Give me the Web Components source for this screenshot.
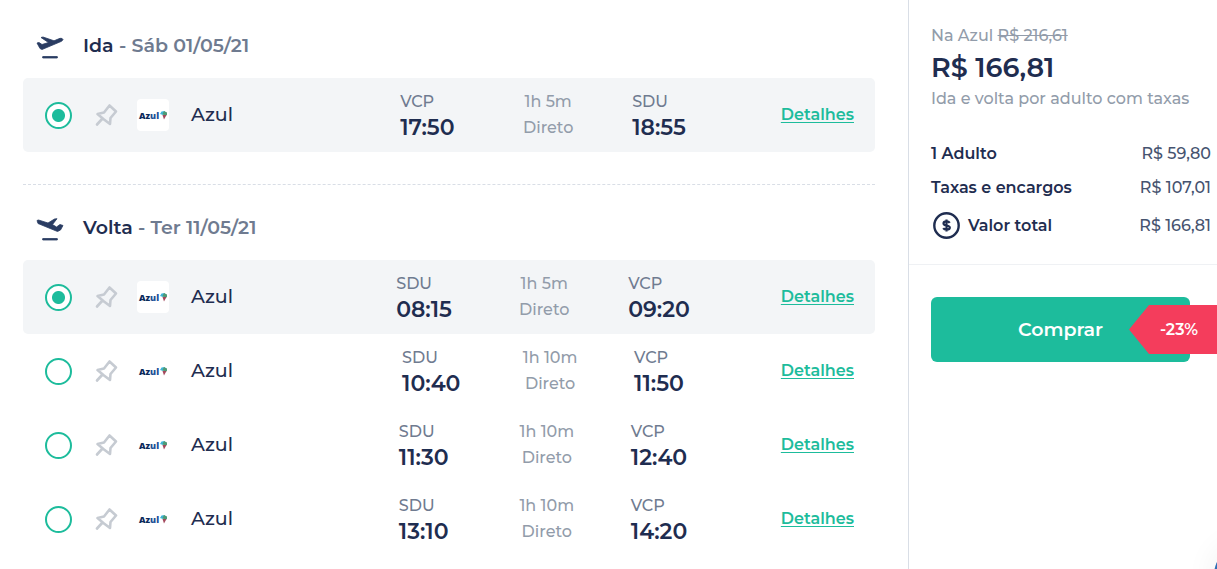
<!DOCTYPE html>
<html lang="pt-BR">
<head>
<meta charset="utf-8">
<title>Azul - Ida e volta</title>
<style>
  body { margin: 0; background: #fff; font-family: Montserrat, Inter, "Liberation Sans", sans-serif; color: #1f2d50; }
</style>
</head>
<body>
<trip-page></trip-page>

<template id="t-page">
  <style>
    :host { display: flex; min-height: 100vh; overflow: hidden; position: relative; }
    main { flex: 1; min-width: 0; padding: 24px 33px 12px 23px; }
    hr { border: 0; border-top: 1px dashed #d9dee6; margin: 32px 0 21px; }
    price-panel { flex: 0 0 308px; }
    .chat { position: absolute; right: -57px; bottom: -36px; width: 60px; height: 60px; border-radius: 50%; background: #2f6fb5; box-shadow: 0 0 32px rgba(0, 0, 0, .07); }
  </style>
  <main>
    <trip-leg kind="ida" label="Ida" date="Sáb 01/05/21">
      <flight-row group="ida" from="VCP" dep="17:50" dur="1h 5m" to="SDU" arr="18:55" selected></flight-row>
    </trip-leg>
    <hr>
    <trip-leg kind="volta" label="Volta" date="Ter 11/05/21">
      <flight-row group="volta" from="SDU" dep="08:15" dur="1h 5m" to="VCP" arr="09:20" selected></flight-row>
      <flight-row group="volta" from="SDU" dep="10:40" dur="1h 10m" to="VCP" arr="11:50"></flight-row>
      <flight-row group="volta" from="SDU" dep="11:30" dur="1h 10m" to="VCP" arr="12:40"></flight-row>
      <flight-row group="volta" from="SDU" dep="13:10" dur="1h 10m" to="VCP" arr="14:20"></flight-row>
    </trip-leg>
  </main>
  <price-panel></price-panel>
  <span class="chat"></span>
</template>

<template id="t-leg">
  <style>
    :host { display: block; }
    header { display: flex; align-items: center; height: 44px; margin-bottom: 10px; padding-left: 13px; gap: 19px; }
    svg { display: block; width: 28px; height: 26px; fill: #2a3c62; stroke: #2a3c62; stroke-width: .8; stroke-linejoin: round; }
    h2 { margin: 0; font-size: 19px; line-height: 24px; font-weight: 600; color: #6f7b90; }
    b { font-weight: 600; color: #1f2d50; }
  </style>
  <header><span class="icon"></span><h2><b></b> - <span class="date"></span></h2></header>
  <slot></slot>
</template>

<template id="t-row">
  <style>
    :host { display: flex; align-items: center; padding: 11px 21px 11px 22px; border-radius: 5px; }
    :host([selected]) { background: #f3f5f7; }
    input { appearance: none; box-sizing: border-box; width: 27px; height: 27px; margin: 0 22px 0 0; border: 2px solid #1dbc9c; border-radius: 50%; background: #fff; }
    input:checked { background: radial-gradient(circle, #1dbc9c 6px, #fff 7px); }
    button { border: 0; background: none; padding: 0; width: 24px; height: 24px; margin-right: 19px; }
    svg { display: block; }
    .logo { width: 32px; height: 32px; margin-right: 22px; background: #fff; border-radius: 4px; }
    .name { flex: 1; font-size: 19px; line-height: 24px; font-weight: 500; }
    .times { flex: 0 0 326px; display: flex; justify-content: center; font-size: 16px; line-height: 26px; color: #6f7b90; }
    .dep { width: 116px; }
    .dur { width: 64px; margin-right: 52px; text-align: center; color: #929caa; white-space: nowrap; }
    .dep, .dur, .arr { font-weight: 500; }
    strong { display: block; font-size: 22px; font-weight: 600; color: #1f2d50; }
    .link { flex: 0 0 148px; text-align: right; }
    a { font-size: 16px; line-height: 24px; font-weight: 600; color: #1dbc9c; text-underline-offset: 2px; }
  </style>
  <input type="radio" aria-label="Selecionar voo">
  <button type="button" aria-label="Fixar voo">
    <svg width="24" height="24" viewBox="0 0 24 24" fill="none" stroke="#c6cbd2" stroke-width="2.6" stroke-linejoin="round" stroke-linecap="round"><path d="M15.500 2.500 22 8.500 16.500 15 16 21 10 16.500 3.500 11 10 9.500Z M8.500 15.500 3 21.500"/></svg>
  </button>
  <svg class="logo" viewBox="0 0 32 32" role="img" aria-label="Azul">
    <text x="2" y="20" font-family="Open Sans, sans-serif" font-size="9" font-weight="800" fill="#0b2a5b">Az<tspan fill="#1d4f96">ul</tspan></text>
    <path d="M23 15 24.500 12.500 28 12 26 16Z" fill="#3fb5d8"/><path d="M27 12 30 13.500 30 16 27.500 17 25.500 15Z" fill="#4f9a76"/><path d="M25.500 16 29.500 16 27 20.500Z" fill="#a3485c"/>
  </svg>
  <span class="name">Azul</span>
  <div class="times">
    <div class="dep"><span></span><strong></strong></div>
    <div class="dur"><span></span><br>Direto</div>
    <div class="arr"><span></span><strong></strong></div>
  </div>
  <div class="link"><a href="#detalhes">Detalhes</a></div>
</template>

<template id="t-price">
  <style>
    :host { display: block; border-left: 1px solid #d9dee6; }
    .head { padding: 24px 6px 0 22px; font-size: 16px; line-height: 24px; font-weight: 500; color: #929caa; white-space: nowrap; }
    .total { font-size: 27px; line-height: 39px; font-weight: 600; color: #1f2d50; }
    dl { margin: 0; padding: 25px 6px 18px 22px; border-bottom: 1px solid #eff1f4; font-size: 16px; }
    dl div { display: flex; justify-content: space-between; align-items: center; height: 34px; }
    dl div:last-child { height: 42px; }
    dt { display: flex; align-items: center; gap: 8px; font-weight: 600; }
    dt svg { margin-left: 2px; }
    dd { margin: 0; font-weight: 500; color: #46536f; }
    .buy { position: relative; margin: 32px 0 0 22px; }
    button { display: block; width: 259px; height: 65px; border: 0; border-radius: 6px; background: #1dbc9c; color: #fff; font: inherit; font-size: 19px; font-weight: 600; }
    .off { position: absolute; right: 0; top: 8px; width: 88px; height: 49px; box-sizing: border-box; padding-left: 12px; background: #f43d5c; clip-path: polygon(0 50%, 20px 0, 100% 0, 100% 100%, 20px 100%); color: #fff; font-size: 16px; line-height: 49px; font-weight: 600; text-align: center; }
  </style>
  <div class="head">
    <div>Na Azul <s>R$ 216,61</s></div>
    <div class="total">R$ 166,81</div>
    <div>Ida e volta por adulto com taxas</div>
  </div>
  <dl>
    <div><dt>1 Adulto</dt><dd>R$ 59,80</dd></div>
    <div><dt>Taxas e encargos</dt><dd>R$ 107,01</dd></div>
    <div><dt><svg width="27" height="27" viewBox="0 0 27 27" fill="none" stroke="#1f2d50"><circle cx="13.500" cy="13.500" r="12.200" stroke-width="2.400"/><path d="M16.700 10.800C16 9.700 15 9.400 13.500 9.400 11.600 9.400 10.500 10.200 10.500 11.400 10.500 14.300 16.800 12.600 16.800 15.600 16.800 17 15.500 17.700 13.600 17.700 12 17.700 10.900 17.200 10.200 16.200M13.500 7.500V19.500" stroke-width="2.2"/></svg>Valor total</dt><dd>R$ 166,81</dd></div>
  </dl>
  <div class="buy"><button type="button">Comprar</button><span class="off">-23%</span></div>
</template>

<script>
  const stamp = (host, id) => {
    const root = host.attachShadow({ mode: 'open' });
    root.append(document.getElementById(id).content.cloneNode(true));
    return root;
  };
  const PLANES = {
    ida: '<svg viewBox="0 -3 28 26" aria-hidden="true"><path d="M1 7 3 6.500 6 8.500 12.500 6.500 5 1.500 7 1 18 4.800 24 2.300Q26.500 2 27 3.500 26.500 4.800 25 5.500L6 13.500 4 12.500Z"/><rect x="6.500" y="20.500" width="15" height="1.500" rx=".5"/></svg>',
    volta: '<svg viewBox="0 -3 28 26" aria-hidden="true"><path d="M1 2.500 2.500 2 12 5 18.500 1 21 .700 16.500 6.500 20.500 9 24 6.500 27 7.500 24.500 12 21.500 13.500 2 5.500Z"/><rect x="6.500" y="20.500" width="15" height="1.500" rx=".5"/></svg>'
  };
  customElements.define('flight-row', class extends HTMLElement {
    connectedCallback() {
      if (this.shadowRoot) return;
      const r = stamp(this, 't-row');
      const put = (sel, attr) => { r.querySelector(sel).textContent = this.getAttribute(attr); };
      put('.dep span', 'from'); put('.dep strong', 'dep'); put('.dur span', 'dur');
      put('.arr span', 'to'); put('.arr strong', 'arr');
      const radio = r.querySelector('input');
      radio.name = this.getAttribute('group');
      radio.checked = this.hasAttribute('selected');
    }
  });
  customElements.define('trip-leg', class extends HTMLElement {
    connectedCallback() {
      if (this.shadowRoot) return;
      const r = stamp(this, 't-leg');
      r.querySelector('.icon').innerHTML = PLANES[this.getAttribute('kind')];
      r.querySelector('b').textContent = this.getAttribute('label');
      r.querySelector('.date').textContent = this.getAttribute('date');
    }
  });
  customElements.define('price-panel', class extends HTMLElement {
    connectedCallback() { if (!this.shadowRoot) stamp(this, 't-price'); }
  });
  customElements.define('trip-page', class extends HTMLElement {
    connectedCallback() { if (!this.shadowRoot) stamp(this, 't-page'); }
  });
</script>
</body>
</html>
